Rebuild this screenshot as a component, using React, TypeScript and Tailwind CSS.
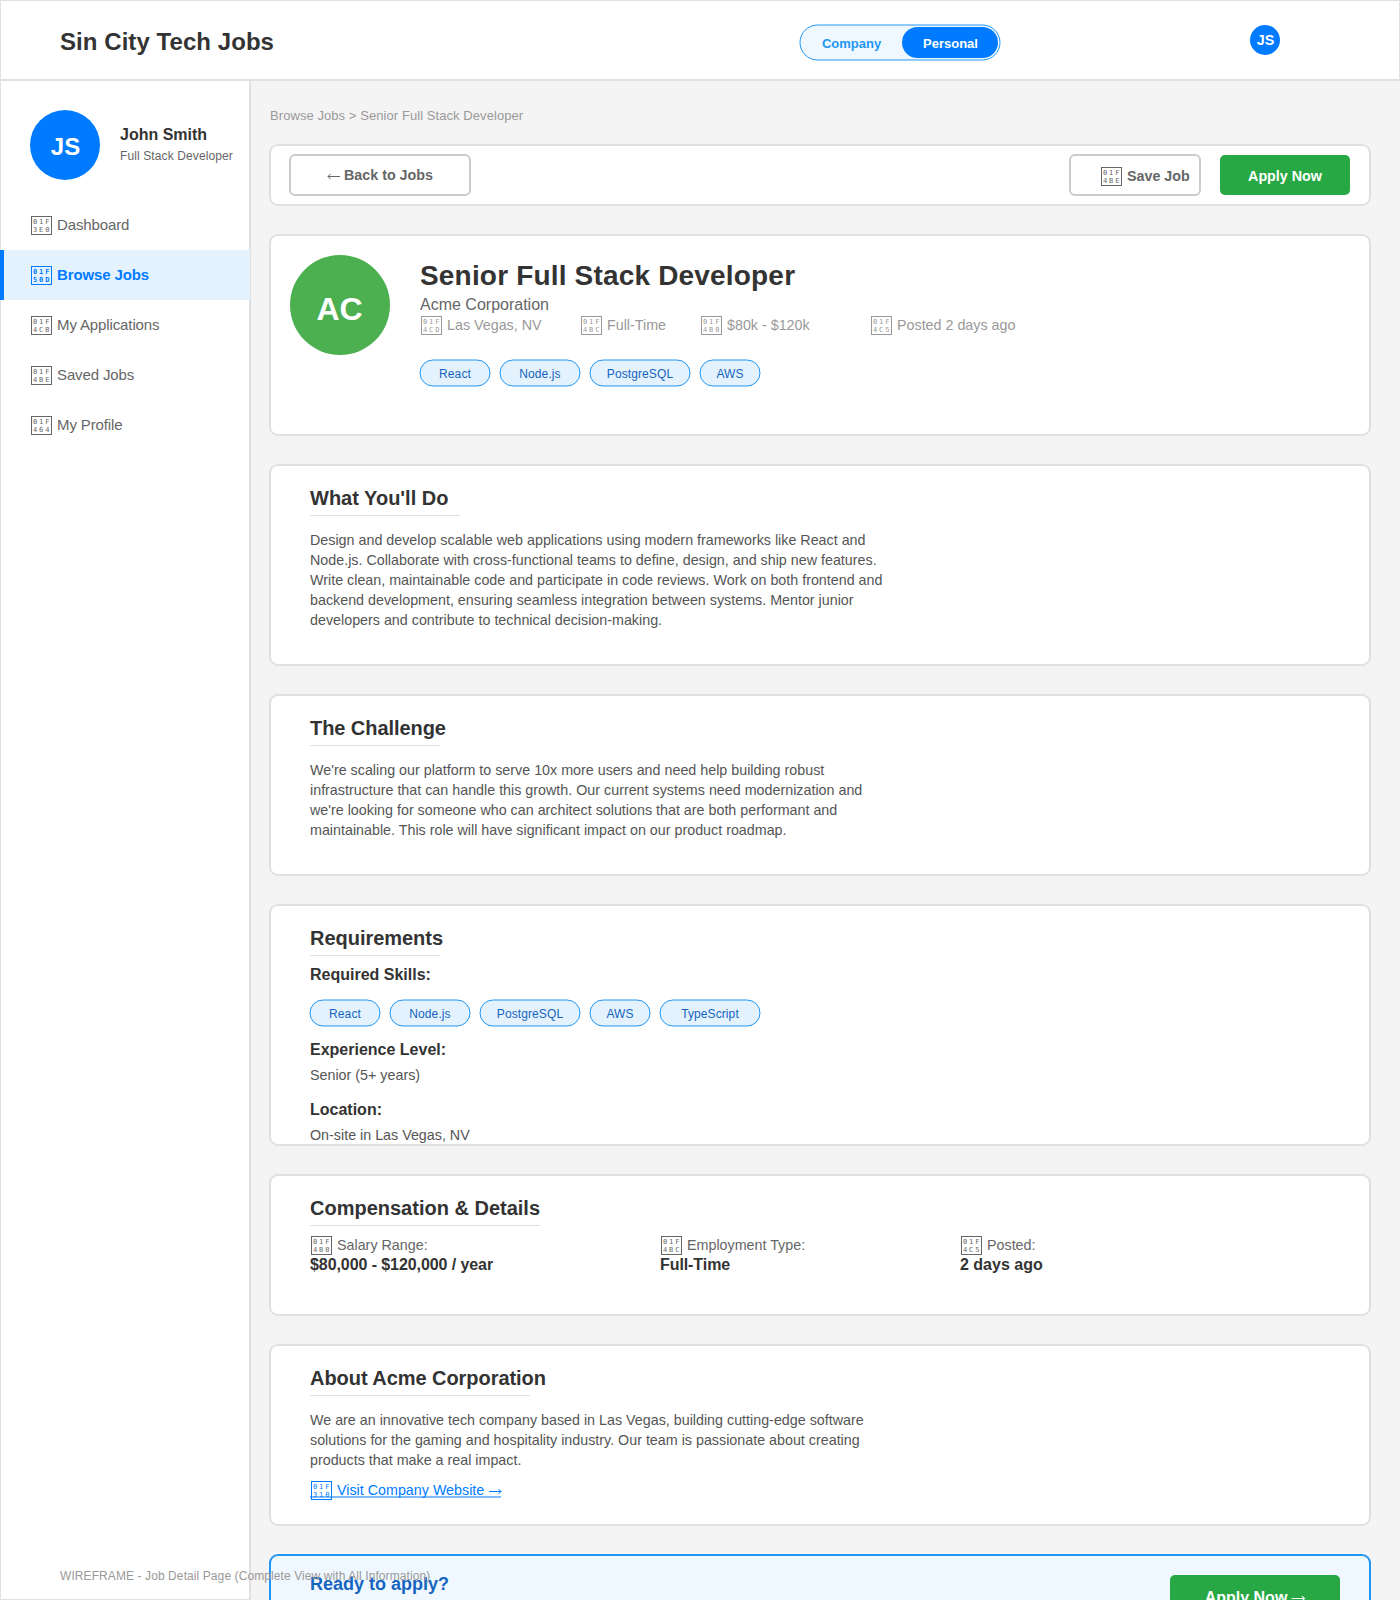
import type { ReactNode } from "react";

function HexBox({ code, bold = false }: { code: string; bold?: boolean }) {
  return (
    <span
      className={`ml-px mr-[5px] block h-[19px] w-[21px] shrink-0 overflow-hidden border border-current pl-[1px] pt-[1px] font-['DejaVu_Sans_Mono',monospace] text-[7px] leading-[8px] tracking-[1.9px] ${
        bold ? "font-bold" : "font-normal"
      }`}
    >
      <span className="block whitespace-nowrap">{code.slice(0, 3)}</span>
      <span className="block whitespace-nowrap">{code.slice(3)}</span>
    </span>
  );
}

function Arrow({ left = false, className }: { left?: boolean; className: string }) {
  return (
    <svg
      viewBox="0 0 13 7"
      fill="none"
      stroke="currentColor"
      strokeWidth="1"
      className={`inline-block h-[7px] w-[13px] align-baseline ${className}`}
    >
      {left ? <path d="M13 3.5H1M3.5 1L1 3.5L3.5 6" /> : <path d="M0 3.5H12M9.5 1L12 3.5L9.5 6" />}
    </svg>
  );
}

function IconText({ code, children, className = "" }: { code: string; children: ReactNode; className?: string }) {
  return (
    <div className={`flex h-5 items-start whitespace-nowrap text-[14.3px] leading-4 ${className}`}>
      <HexBox code={code} />
      <span className="mt-px">{children}</span>
    </div>
  );
}

function Tag({ label, className }: { label: string; className: string }) {
  return (
    <span
      className={`relative block h-[26px] text-center text-[12px] leading-[14px] tracking-[0.1px] text-[#1565c0] ${className}`}
    >
      <span className="absolute left-0 top-0 h-[27px] w-[calc(100%+1px)] -translate-x-[0.5px] -translate-y-[0.5px] rounded-full border border-[#2196f3] bg-[#e3f2fd]" />
      <span className="relative block pt-[7px]">{label}</span>
    </span>
  );
}

function Card({ className = "", children }: { className?: string; children: ReactNode }) {
  return (
    <section className={`shrink-0 rounded-[9px] border-2 border-[#e0e0e0] bg-white ${className}`}>{children}</section>
  );
}

function Section({
  title,
  height,
  rule,
  titleClass = "",
  children,
}: {
  title: string;
  height: string;
  rule: string;
  titleClass?: string;
  children: ReactNode;
}) {
  return (
    <Card className={`pl-[39px] pt-[21px] ${height}`}>
      <h2 className={`whitespace-nowrap text-[20px] font-bold leading-[22px] text-[#333] ${titleClass}`}>{title}</h2>
      <div className={`mt-1.5 h-px bg-[#e0e0e0] ${rule}`} />
      {children}
    </Card>
  );
}

function Lines({ lines }: { lines: string[] }) {
  return (
    <p className="mt-3.5 text-[14.3px] leading-5 text-[#555]">
      {lines.map((line) => (
        <span key={line} className="block whitespace-nowrap">
          {line}
        </span>
      ))}
    </p>
  );
}

const nav = [
  { code: "01F3E0", label: "Dashboard" },
  { code: "01F50D", label: "Browse Jobs", active: true },
  { code: "01F4CB", label: "My Applications" },
  { code: "01F4BE", label: "Saved Jobs" },
  { code: "01F464", label: "My Profile" },
];

function Header() {
  return (
    <header className="flex h-[81px] shrink-0 items-start border border-b-2 border-[#e0e0e0] bg-white pl-[59px]">
      <h1 className="mt-[27px] w-[740px] text-[24px] font-bold leading-[27px] tracking-[0.06px] text-[#333]">
        Sin City Tech Jobs
      </h1>
      <div className="relative mt-6 flex h-[35px] w-[200px] text-center text-[13px] font-bold leading-[15px]">
        <span className="absolute left-0 top-0 h-9 w-[201px] -translate-x-[0.5px] -translate-y-[0.5px] rounded-full border border-[#2196f3] bg-[#f0f8ff]" />
        <span className="relative w-[102px] pl-px pt-[11px] text-[#2196f3]">Company</span>
        <span className="relative mt-0.5 h-[31px] w-24 rounded-full bg-[#007bff] pl-px pt-[9px] text-white">
          Personal
        </span>
      </div>
      <div className="ml-[250px] mt-6 h-[30px] w-[30px] rounded-full bg-[#007bff] pl-px pt-[7px] text-center text-[14.3px] font-bold leading-4 text-white">
        JS
      </div>
    </header>
  );
}

function Sidebar() {
  return (
    <aside className="w-[251px] shrink-0 border-b border-l border-r-2 border-[#e0e0e0] bg-white pt-[29px]">
      <div className="flex items-start pl-[29px]">
        <div className="h-[70px] w-[70px] shrink-0 rounded-full bg-[#007bff] pl-px pt-[23px] text-center text-[24px] font-bold leading-[27px] text-white">
          JS
        </div>
        <div className="ml-5 mt-4 whitespace-nowrap">
          <div className="text-[16px] font-bold leading-[17px] text-[#333]">John Smith</div>
          <div className="mt-1.5 text-[12px] leading-[14px] tracking-[0.11px] text-[#666]">Full Stack Developer</div>
        </div>
      </div>
      <nav className="mt-5">
        {nav.map((item) => (
          <a
            key={item.code}
            className={`relative -ml-px -mr-px flex h-[50px] items-start pt-4 text-[15px] leading-[17px] tracking-[-0.12px] ${
              item.active
                ? "border-l-4 border-[#007bff] bg-[#e3f2fd] pl-[26px] font-bold text-[#007bff]"
                : "pl-[30px] text-[#666]"
            }`}
          >
            <HexBox code={item.code} bold={item.active} />
            {item.label}
          </a>
        ))}
      </nav>
    </aside>
  );
}

export default function App() {
  return (
    <div className="relative flex h-[1600px] w-[1400px] flex-col overflow-hidden bg-[#f4f4f4] font-['Liberation_Sans',Arial,sans-serif]">
      <Header />
      <div className="flex min-h-0 flex-1">
        <Sidebar />
        <main className="flex min-w-0 flex-1 flex-col gap-7 pl-[18px] pr-[29px] pt-[27px]">
          <div className="-mb-[7px] ml-px shrink-0 text-[13px] leading-[15px] tracking-[0.07px] text-[#999]">
            Browse Jobs &gt; Senior Full Stack Developer
          </div>

          <Card className="flex h-[62px] items-start pl-[18px] pr-[19px] pt-2 text-[14.3px] font-bold leading-4 text-[#666]">
            <button className="h-[42px] w-[182px] rounded-[6px] border-2 border-[#ccc] pb-[11px] pt-[11px]">
              <span className="flex h-4 items-start justify-center">
                <Arrow left className="mr-1 mt-[6px]" />
                Back to Jobs
              </span>
            </button>
            <button className="ml-auto flex h-[42px] w-[132px] items-start whitespace-nowrap rounded-[6px] border-2 border-[#ccc] pl-[29px] pt-[11px]">
              <HexBox code="01F4BE" />
              <span className="mt-px">Save Job</span>
            </button>
            <button className="ml-[19px] mt-px block h-10 w-[130px] rounded-[5px] bg-[#28a745] pb-[11px] pt-[13px] text-white">
              Apply Now
            </button>
          </Card>

          <Card className="flex h-[202px] items-start pl-[19px] pt-[19px]">
            <div className="h-[100px] w-[100px] shrink-0 rounded-full bg-[#4caf50] pr-px pt-9 text-center text-[32px] font-bold leading-9 text-white">
              AC
            </div>
            <div className="ml-[30px] pt-[5px]">
              <h2 className="whitespace-nowrap text-[28px] font-bold leading-[31px] tracking-[0.18px] text-[#333]">
                Senior Full Stack Developer
              </h2>
              <div className="mt-[5px] text-[16px] leading-[17px] text-[#666]">Acme Corporation</div>
              <div className="mt-[3px] flex text-[#999]">
                <IconText code="01F4CD" className="w-40">Las Vegas, NV</IconText>
                <IconText code="01F4BC" className="w-[120px]">Full-Time</IconText>
                <IconText code="01F4B0" className="w-[170px]">$80k - $120k</IconText>
                <IconText code="01F4C5">Posted 2 days ago</IconText>
              </div>
              <div className="mt-6 flex gap-2.5">
                <Tag label="React" className="w-[70px]" />
                <Tag label="Node.js" className="w-20" />
                <Tag label="PostgreSQL" className="w-[100px]" />
                <Tag label="AWS" className="w-[60px]" />
              </div>
            </div>
          </Card>

          <Section title="What You'll Do" height="h-[202px]" rule="w-[150px]">
            <Lines
              lines={[
                "Design and develop scalable web applications using modern frameworks like React and",
                "Node.js. Collaborate with cross-functional teams to define, design, and ship new features.",
                "Write clean, maintainable code and participate in code reviews. Work on both frontend and",
                "backend development, ensuring seamless integration between systems. Mentor junior",
                "developers and contribute to technical decision-making.",
              ]}
            />
          </Section>

          <Section title="The Challenge" height="h-[182px]" rule="w-[130px]" titleClass="tracking-[-0.06px]">
            <Lines
              lines={[
                "We're scaling our platform to serve 10x more users and need help building robust",
                "infrastructure that can handle this growth. Our current systems need modernization and",
                "we're looking for someone who can architect solutions that are both performant and",
                "maintainable. This role will have significant impact on our product roadmap.",
              ]}
            />
          </Section>

          <Section title="Requirements" height="h-[242px]" rule="w-[130px]" titleClass="tracking-[-0.03px]">
            <h3 className="mt-2.5 text-[16px] font-bold leading-[17px] text-[#333]">Required Skills:</h3>
            <div className="mt-[17px] flex gap-2.5">
              <Tag label="React" className="w-[70px]" />
              <Tag label="Node.js" className="w-20" />
              <Tag label="PostgreSQL" className="w-[100px]" />
              <Tag label="AWS" className="w-[60px]" />
              <Tag label="TypeScript" className="w-[100px]" />
            </div>
            <h3 className="mt-[15px] text-[16px] font-bold leading-[17px] text-[#333]">Experience Level:</h3>
            <p className="mt-[9px] text-[14.3px] leading-4 text-[#555]">Senior (5+ years)</p>
            <h3 className="mt-[18px] text-[16px] font-bold leading-[17px] text-[#333]">Location:</h3>
            <p className="mt-[9px] text-[14.3px] leading-4 text-[#555]">On-site in Las Vegas, NV</p>
          </Section>

          <Section title="Compensation & Details" height="h-[142px]" rule="w-[230px]">
            <div className="mt-2.5 flex text-[16px] font-bold leading-[17px] text-[#333]">
              <div className="w-[350px] tracking-[-0.08px]">
                <IconText code="01F4B0" className="font-normal tracking-normal text-[#666]">Salary Range:</IconText>
                $80,000 - $120,000 / year
              </div>
              <div className="w-[300px] tracking-[-0.08px]">
                <IconText code="01F4BC" className="font-normal tracking-normal text-[#666]">Employment Type:</IconText>
                Full-Time
              </div>
              <div>
                <IconText code="01F4C5" className="font-normal text-[#666]">Posted:</IconText>
                2 days ago
              </div>
            </div>
          </Section>

          <Section title="About Acme Corporation" height="h-[182px]" rule="w-[220px]" titleClass="tracking-[-0.05px]">
            <Lines
              lines={[
                "We are an innovative tech company based in Las Vegas, building cutting-edge software",
                "solutions for the gaming and hospitality industry. Our team is passionate about creating",
                "products that make a real impact.",
              ]}
            />
            <a className="relative mt-[11px] block w-[191px] text-[#007bff]">
              <IconText code="01F310">
                <span className="flex items-start">
                  Visit Company Website
                  <Arrow className="ml-[5px] mt-[6px]" />
                </span>
              </IconText>
              <span className="absolute left-0 top-[15px] h-0.5 w-full bg-[#007bff]/50" />
            </a>
          </Section>

          <section className="flex h-[120px] shrink-0 items-start justify-between rounded-[9px] border-2 border-[#2196f3] bg-[#f0f8ff] pl-[39px] pr-[29px]">
            <h2 className="mt-[18px] text-[18px] font-bold leading-5 text-[#1565c0]">Ready to apply?</h2>
            <div className="mt-[19px] flex h-[50px] w-[170px] items-start justify-center rounded-[5px] bg-[#28a745] pt-[14px] text-[16px] font-bold leading-[17px] text-white">
              Apply Now
              <Arrow className="ml-[5px] mt-[6px] scale-x-110" />
            </div>
          </section>
        </main>
      </div>
      <div className="absolute left-[60px] top-[1569px] whitespace-nowrap text-[12px] leading-[14px] tracking-[0.09px] text-[#999]">
        WIREFRAME - Job Detail Page (Complete View with All Information)
      </div>
    </div>
  );
}
